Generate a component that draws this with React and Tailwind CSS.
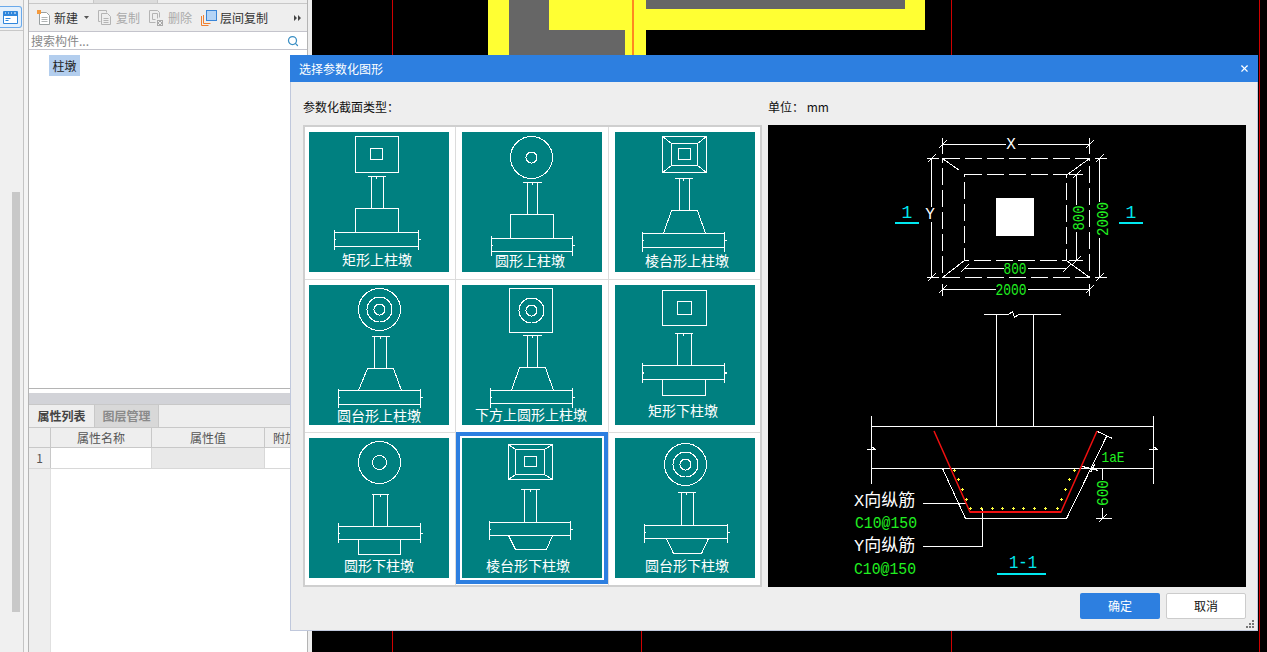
import React from 'react'
import { Search, X } from 'lucide-react'

const CJK = '"Noto Sans CJK SC", "Liberation Sans", sans-serif'
const MONO = '"Liberation Mono", "Noto Sans CJK SC", monospace'

// 每个图块的立面：标注线、柱、板
function Post({ dim, col, slab, ext, sideTick }) {
  const [dx1, dx2, dy] = dim
  const [cx1, cx2, cy2] = col
  const [sx1, sx2, sy1, sy2] = slab
  const my = (sy1 + sy2) / 2
  return (
    <g>
      <path d={`M${dx1} ${dy}H${dx2}M${(dx1 + dx2) / 2} ${dy - 1}v3`} />
      <path d={`M${cx1} ${dy}V${cy2}M${cx2} ${dy}V${cy2}`} />
      <rect x={sx1} y={sy1} width={sx2 - sx1} height={sy2 - sy1} />
      <path d={`M${sx1} ${ext[0]}V${ext[1]}M${sx2} ${ext[0]}V${ext[1]}`} />
      <path d={`M${sx1 - 1} ${my}h2M${sx2 - 1} ${my}h3`} strokeWidth={sideTick ? 2 : 1} />
    </g>
  )
}

function Rings({ cx, cy, rs }) {
  return rs.map((r) => <circle key={r} cx={cx} cy={cy} r={r} />)
}

function Frustum({ o, m, i }) {
  return (
    <g>
      <rect x={o[0]} y={o[2]} width={o[1] - o[0]} height={o[3] - o[2]} />
      <rect x={m[0]} y={m[2]} width={m[1] - m[0]} height={m[3] - m[2]} />
      <rect x={i[0]} y={i[2]} width={i[1] - i[0]} height={i[3] - i[2]} />
      <path d={`M${o[0]} ${o[2]}L${m[0]} ${m[2]}M${o[1]} ${o[2]}L${m[1]} ${m[2]}M${o[0]} ${o[3]}L${m[0]} ${m[3]}M${o[1]} ${o[3]}L${m[1]} ${m[3]}`} />
    </g>
  )
}

const r = (x1, y1, x2, y2) => <rect x={x1} y={y1} width={x2 - x1} height={y2 - y1} />

const TILES = [
  {
    label: '矩形上柱墩', lx: 68, ly: 133,
    art: (
      <>
        {r(46, 4, 89, 40)}{r(61, 16, 73, 27)}
        <Post dim={[58, 76, 44]} col={[62, 74, 76]} slab={[25, 109, 100, 114]} ext={[97, 117]} />
        {r(46, 76, 89, 100)}
      </>
    ),
  },
  {
    label: '圆形上柱墩', lx: 68, ly: 134,
    art: (
      <>
        <Rings cx={69} cy={25} rs={[21, 5.5]} />
        <Post dim={[60, 79, 50]} col={[65, 75, 82]} slab={[29, 110, 106, 119]} ext={[103, 123]} />
        {r(48, 82, 91, 106)}
      </>
    ),
  },
  {
    label: '棱台形上柱墩', lx: 72, ly: 134,
    art: (
      <>
        <Frustum o={[47, 91, 4, 40]} m={[56, 82, 11, 33]} i={[63, 75, 16, 27]} />
        <Post dim={[59, 77, 46]} col={[64, 74, 78]} slab={[27, 109, 101, 115]} ext={[99, 119]} />
        <path d="M48 101L56 78H82L90 101" />
      </>
    ),
  },
  {
    label: '圆台形上柱墩', lx: 70, ly: 136,
    art: (
      <>
        <Rings cx={70} cy={24} rs={[21, 12.5, 5.5]} />
        <Post dim={[62, 80, 51]} col={[65, 77, 83]} slab={[29, 111, 105, 119]} ext={[103, 122]} />
        <path d="M49 105L58 83H84L92 105" />
      </>
    ),
  },
  {
    label: '下方上圆形上柱墩', lx: 69, ly: 135,
    art: (
      <>
        {r(47, 3, 90, 47)}
        <Rings cx={69} cy={25} rs={[12.5, 5.5]} />
        <Post dim={[60, 79, 50]} col={[65, 75, 82]} slab={[28, 110, 105, 118]} ext={[102, 122]} />
        <path d="M49 105L57 82H83L91 105" />
      </>
    ),
  },
  {
    label: '矩形下柱墩', lx: 68, ly: 131,
    art: (
      <>
        {r(47, 5, 91, 40)}{r(62, 16, 76, 29)}
        <Post dim={[59, 77, 48]} col={[62, 76, 80]} slab={[27, 109, 80, 94]} ext={[77, 97]} sideTick />
        {r(47, 94, 90, 110)}
      </>
    ),
  },
  {
    label: '圆形下柱墩', lx: 70, ly: 133,
    art: (
      <>
        <Rings cx={70} cy={24} rs={[21, 7]} />
        <Post dim={[62, 79, 56]} col={[64, 78, 88]} slab={[29, 111, 88, 101]} ext={[84, 104]} />
        {r(49, 101, 91, 116)}
      </>
    ),
  },
  {
    label: '棱台形下柱墩', lx: 66, ly: 133, selected: true,
    art: (
      <>
        <Frustum o={[46, 90, 6, 41]} m={[53, 82, 11, 36]} i={[62, 74, 18, 28]} />
        <Post dim={[58, 77, 51]} col={[62, 74, 84]} slab={[27, 108, 84, 97]} ext={[82, 101]} />
        <path d="M46 97L53 111H84L90 97" />
      </>
    ),
  },
  {
    label: '圆台形下柱墩', lx: 72, ly: 133,
    art: (
      <>
        <Rings cx={70} cy={26} rs={[21, 12.5, 5.5]} />
        <Post dim={[62, 80, 54]} col={[66, 78, 87]} slab={[29, 112, 87, 100]} ext={[85, 104]} />
        <path d="M51 100L58 115H86L93 100" />
      </>
    ),
  },
]

function Tile({ tile }) {
  return (
    <div className={`w-[140px] h-[140px] bg-[#008080] ${tile.selected ? 'outline-4 outline-offset-2 outline-[#2d7fe0]' : ''}`}>
      <svg width="140" height="140" viewBox="0 0 140 140" className="block">
        <g transform="translate(0.5 0.5)" fill="none" stroke="#fff" strokeWidth="1" shapeRendering="crispEdges">
          {tile.art}
        </g>
        <text x={tile.lx} y={tile.ly} textAnchor="middle" fill="#fff" fontSize="14" fontFamily={CJK}>{tile.label}</text>
      </svg>
    </div>
  )
}

const DOTS = [
  [343, 211], [355, 238], [367, 268], [379, 298], [391, 325], [424, 325], [457, 325], [487, 325], [520, 325],
  [550, 325], [583, 325], [616, 325], [652, 325], [664, 298], [676, 268], [688, 238], [703, 211],
]

// 标注文字：字高按 CAD 图，宽度压到原图的长度
function CadText({ len, children, ...rest }) {
  return (
    <text textLength={len} lengthAdjust="spacingAndGlyphs" {...rest}>{children}</text>
  )
}

// 右侧 CAD 预览：1px 线条，坐标相对预览左上角
function Preview() {
  const tick = (x, y) => `M${x - 4} ${y + 4}L${x + 4} ${y - 4}`
  return (
    <svg width="478" height="462" viewBox="0 0 478 462" className="block bg-black">
      <g fill="none" stroke="#fff" strokeWidth="1" shapeRendering="crispEdges" transform="translate(0.5 0.5)">
        {/* 平面图 */}
        <rect x="174" y="33" width="147" height="119" strokeDasharray="17 5" />
        <rect x="196" y="49" width="102" height="86" strokeDasharray="17 5" />
        <path d="M174 33L191 45M321 33L299 49M174 152L196 135M321 152L298 135" />
        <path d={`M174 19H237M249 19H321M174 12V28M321 12V28${tick(174, 19)}${tick(321, 19)}`} />
        <path d={`M163 33V81M163 96V152M158 33H170M158 152H170${tick(163, 33)}${tick(163, 152)}`} />
        <path d={`M331 33V76M331 112V152M326 33H338M326 152H338${tick(331, 33)}${tick(331, 152)}`} />
        <path d={`M308 49V79M308 106V135M300 49H314M300 135H314${tick(308, 49)}${tick(308, 135)}`} />
        <path d={`M196 143H235M259 143H298${tick(196, 143)}${tick(298, 143)}`} />
        <path d={`M174 164H227M259 164H321M174 158V170M321 158V170${tick(174, 164)}${tick(321, 164)}`} />
        {/* 剖面图 */}
        <path d="M215 189H240L244 186L246 192L250 189H292M228 189V301M265 189V301" />
        <path d="M103 301H385M103 343H385M103 290V358M385 290V358" />
        <path d="M98 324H107L103 321V327M380 324H389L385 321V327" />
        <path d="M174 343L197 393H298L338 311M329 306L344 313" />
        <path d="M314 341L330 345M322 347L326 339" />
        <path d="M334 342V354M334 382V393M327 393H343M330 397L338 389" />
        <path d="M154 378H197M154 421H214V383" />
      </g>
      <rect x="228" y="73" width="38" height="38" fill="#fff" />
      <path d="M166 306L202 387H293L329 306" fill="none" stroke="#f01010" strokeWidth="1.5" />
      <rect x="202" y="386" width="91" height="2" fill="#f01010" />
      {DOTS.map(([zx, zy]) => {
        const x = Math.round(zx / 3 + 72)
        const y = Math.round(zy / 3 + 275)
        return <path key={zx + '-' + zy} d={`M${x - 1} ${y + 0.5}h3M${x + 0.5} ${y - 1}v3`} stroke="#ffff40" fill="none" />
      })}
      <rect x="127" y="97" width="24" height="2" fill="#00e8f0" />
      <rect x="351" y="97" width="24" height="2" fill="#00e8f0" />
      <rect x="229" y="448" width="49" height="2" fill="#00e8f0" />
      <g fontFamily={MONO} fontSize="16">
        <g fill="#fff" textAnchor="middle">
          <text x="243" y="24">X</text>
          <text x="162" y="94">Y</text>
        </g>
        <g fill="#00e8f0" textAnchor="middle" fontSize="18">
          <text x="139" y="93">1</text>
          <text x="363" y="93">1</text>
          <CadText x="255" y="443" len="28">1-1</CadText>
        </g>
        <g fill="#20f020" textAnchor="middle">
          <CadText x="247" y="149" len="23">800</CadText>
          <CadText x="243" y="170" len="31">2000</CadText>
          <CadText transform="translate(316 93) rotate(-90)" len="25">800</CadText>
          <CadText transform="translate(340 94) rotate(-90)" len="34">2000</CadText>
          <CadText transform="translate(340 368) rotate(-90)" len="26">600</CadText>
          <CadText x="345" y="337" len="23" fontSize="15">1aE</CadText>
        </g>
        <g fill="#fff" fontSize="17">
          <text x="86" y="381">X向纵筋</text>
          <text x="86" y="426">Y向纵筋</text>
        </g>
        <g fill="#20f020">
          <CadText x="87" y="403" len="62">C10@150</CadText>
          <CadText x="86" y="449" len="62">C10@150</CadText>
        </g>
      </g>
    </svg>
  )
}

function NewIcon() {
  return (
    <svg width="16" height="16" viewBox="0 0 16 16">
      <path d="M3.5 2.5h7l3 3v9h-10z" fill="#fff" stroke="#9aa0a0" />
      <path d="M5.5 7.5h6M5.5 9.5h6M5.5 11.5h6" stroke="#b0b4b4" />
      <rect x="1" y="0" width="4" height="4" fill="#f59a3c" />
    </svg>
  )
}

function CopyIcon() {
  return (
    <svg width="13" height="16" viewBox="0 0 13 16" fill="none" stroke="#b4b4b4">
      <path d="M.5.5h8v2M.5.5v11h2" />
      <path d="M3.5 3.5h6l3 3v8h-9z" fill="#eee" />
      <path d="M5.5 8.5h5M5.5 10.5h5M5.5 12.5h5" />
    </svg>
  )
}

function DeleteIcon() {
  return (
    <svg width="14" height="16" viewBox="0 0 14 16" fill="none" stroke="#b4b4b4">
      <path d="M.5.5h8l2 2v5M.5.5v12h6" />
      <path d="M3.5 3.5h5v5M3.5 3.5v6h3" />
      <rect x="8" y="10" width="6" height="6" fill="#aaa" stroke="none" />
      <path d="M9 11l4 4M13 11l-4 4" stroke="#eee" />
    </svg>
  )
}

function LayerCopyIcon() {
  return (
    <svg width="16" height="16" viewBox="0 0 16 16" fill="none">
      <path d="M.5 6v9.5h7M2.5 5v8.5h7" stroke="#f08030" />
      <rect x="5.5" y="0.5" width="10" height="10" fill="#b4d4f6" stroke="#3a86d8" />
    </svg>
  )
}

function ModuleIcon() {
  return (
    <div className="w-[22px] h-[22px] mt-[6px] border border-[#6aa9ea] rounded-[3px] rounded-l-none border-l-0 bg-[#e4f0fc] flex items-center justify-center">
      <svg width="15" height="13" viewBox="0 0 15 13">
        <rect x="0" y="0" width="15" height="13" rx="1" fill="#2f86dc" />
        <rect x="1" y="5" width="13" height="7" fill="#fff" />
        <path d="M2 2h1M5 2h1M8 2h1M11 2h2" stroke="#fff" />
        <path d="M2.5 7.5h5M2.5 9.5h3" stroke="#2f86dc" />
      </svg>
    </div>
  )
}

function ToolButton({ icon, label, disabled, gap }) {
  return (
    <div className={`flex items-center ${gap} ${disabled ? 'text-[#aaaaaa]' : 'text-[#333333]'}`}>
      {icon}
      <span>{label}</span>
    </div>
  )
}

function ComponentPanel() {
  return (
    <div className="w-[280px] h-full flex flex-col border-x border-[#b4b4b4] bg-white text-[12px]">
      <div className="h-[4px] bg-[#eeeeee] border-b border-[#c8c8c8] flex">
        <div className="ml-[64px] w-[65px] bg-[#dcdcdc] border-x border-[#c8c8c8]" />
      </div>
      <div className="h-[27px] bg-[#eeeeee] flex items-center pl-[7px] pr-[6px]">
        <ToolButton icon={<NewIcon />} label="新建" gap="gap-[2px]" />
        <svg width="5" height="3" viewBox="0 0 5 3" className="ml-[6px]"><path d="M0 0h5L2.5 3z" fill="#555" /></svg>
        <div className="ml-[9px]"><ToolButton icon={<CopyIcon />} label="复制" gap="gap-[5px]" disabled /></div>
        <div className="ml-[9px]"><ToolButton icon={<DeleteIcon />} label="删除" gap="gap-[5px]" disabled /></div>
        <div className="ml-[9px]"><ToolButton icon={<LayerCopyIcon />} label="层间复制" gap="gap-[3px]" /></div>
        <svg width="7" height="6" viewBox="0 0 7 6" className="ml-auto"><path d="M0 0l3 3-3 3zM4 0l3 3-3 3z" fill="#444" /></svg>
      </div>
      <div className="h-[19px] border-y border-[#c4c4cc] flex items-center pl-[2px] pr-[8px] text-[#888888] bg-white">
        <span>搜索构件...</span>
        <Search size={12} strokeWidth={2.5} className="ml-auto text-[#3b8fc4]" />
      </div>
      <div className="h-[338px] shrink-0 pl-[20px] pt-[5px]">
        <div className="w-[31px] h-[21px] bg-[#b3ceee] text-[#222222] flex items-center justify-center">柱墩</div>
      </div>
      <div className="h-[5px] shrink-0 border-t border-[#b4b4b4] bg-white" />
      <div className="h-[11px] shrink-0 bg-[#d2d3d8]" />
      <div className="h-[23px] shrink-0 bg-[#eeeeee] flex border-t border-[#c8c8c8] font-bold">
        <div className="w-[65px] flex items-center justify-center text-[#444444]">属性列表</div>
        <div className="w-[65px] flex items-center justify-center bg-[#d8d8d8] text-[#8a8a8a] border-x border-[#c8c8c8]">图层管理</div>
      </div>
      <div className="h-[21px] shrink-0 flex items-stretch border-y border-[#c8c8c8] text-[#555555] bg-[#eeeeee]">
        <div className="w-[22px] border-r border-[#c8c8c8]" />
        <div className="w-[101px] border-r border-[#c8c8c8] flex items-center justify-center">属性名称</div>
        <div className="w-[113px] border-r border-[#c8c8c8] flex items-center justify-center">属性值</div>
        <div className="flex-1 pl-[8px] flex items-center">附加</div>
      </div>
      <div className="h-[21px] shrink-0 flex border-b border-[#d8d8d8]">
        <div className="w-[22px] border-r border-[#c8c8c8] bg-[#eeeeee] text-[#555555] flex items-center justify-center">1</div>
        <div className="w-[101px] border-r border-[#d8d8d8]" />
        <div className="w-[113px] border-r border-[#d8d8d8] bg-[#e9e9e9]" />
      </div>
      <div className="flex-1 flex">
        <div className="w-[22px] bg-[#eeeeee] border-r border-[#e0e0e0]" />
      </div>
    </div>
  )
}

// 背景里的 CAD 画布，红线在黄色图形下面
function Canvas() {
  return (
    <svg width="955" height="652" viewBox="312 0 955 652" className="block bg-black">
      {[392, 641, 951, 1259].map((x) => (
        <rect key={x} x={x} y="0" width="1" height="652" fill="#d00000" />
      ))}
      <rect x="488" y="0" width="158" height="55" fill="#ffff33" />
      <rect x="646" y="0" width="279" height="30" fill="#ffff33" />
      <path d="M509 0V55H625V30H549V0z" fill="#666666" />
      <rect x="646" y="0" width="259" height="9" fill="#666666" />
      <rect x="632" y="0" width="2" height="55" fill="#ff8820" />
    </svg>
  )
}

export default function App() {
  return (
    <div className="relative w-[1267px] h-[652px] overflow-hidden flex bg-[#f4f4f4]" style={{ fontFamily: CJK }}>
      <div className="w-[24px] h-full shrink-0 bg-[#f0f0f0] border-r border-[#c4c4c4] flex flex-col">
        <div className="h-[31px] border-b border-[#c8c8c8] shrink-0"><ModuleIcon /></div>
        <div className="flex-1 pl-[12px] pt-[161px] pb-[40px]">
          <div className="w-[8px] h-full bg-[#c8c8c8]" />
        </div>
      </div>
      <div className="w-[4px] shrink-0" />
      <ComponentPanel />
      <div className="w-[4px] shrink-0 bg-[#eeeeee]" />
      <Canvas />

      {/* 选择参数化图形 对话框 */}
      <div className="absolute left-[290px] top-[55px] w-[968px] h-[576px] flex flex-col bg-[#eeeeee] border border-t-0 border-[#c0c8dc]">
        <div className="h-[27px] shrink-0 bg-[#2d7fe0] text-white text-[12px] flex items-center pl-[8px] pr-[8px] -mx-px">
          <span className="ml-px">选择参数化图形</span>
          <X size={11} strokeWidth={2.5} className="ml-auto" />
        </div>
        <div className="flex pl-[12px] h-[43px] items-end pb-[9px] text-[12px] text-[#111111] shrink-0">
          <span className="w-[465px]">参数化截面类型：</span>
          <span>单位： mm</span>
        </div>
        <div className="flex pl-[12px] gap-[6px]">
          <div className="w-[459px] h-[462px] border-2 border-[#cfcfcf] bg-white grid grid-cols-[151px_153px_151px] grid-rows-[153px_153px_152px]">
            {TILES.map((t, i) => (
              <div
                key={t.label}
                className={`pt-[5px] ${i % 3 === 0 ? 'pl-[4px]' : 'pl-[6px]'} ${i % 3 !== 2 ? 'border-r border-[#dcdcdc]' : ''} ${i < 6 ? 'border-b border-[#dcdcdc]' : ''}`}
              >
                <Tile tile={t} />
              </div>
            ))}
          </div>
          <Preview />
        </div>
        <div className="flex justify-end gap-[6px] pt-[6px] pr-[11px] text-[12px]">
          <div className="w-[80px] h-[26px] rounded-[2px] bg-[#2d7fe0] text-white flex items-center justify-center">确定</div>
          <div className="w-[80px] h-[26px] rounded-[2px] bg-white border border-[#cccccc] text-[#111111] flex items-center justify-center">取消</div>
        </div>
        <div className="flex justify-end pr-[3px] pt-[1px]">
          <svg width="8" height="8" viewBox="0 0 8 8" fill="#777777">
            <rect x="6" y="0" width="2" height="2" /><rect x="3" y="3" width="2" height="2" /><rect x="6" y="3" width="2" height="2" />
            <rect x="0" y="6" width="2" height="2" /><rect x="3" y="6" width="2" height="2" /><rect x="6" y="6" width="2" height="2" />
          </svg>
        </div>
      </div>
    </div>
  )
}
